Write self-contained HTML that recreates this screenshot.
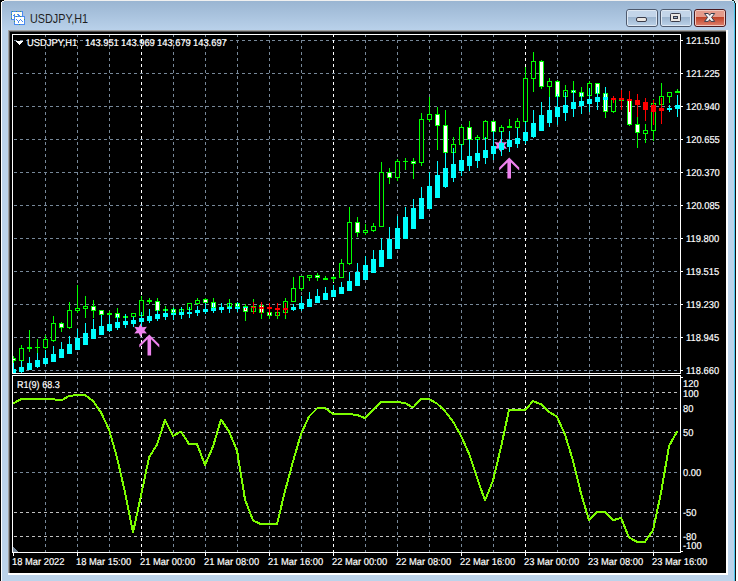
<!DOCTYPE html>
<html><head><meta charset="utf-8"><style>
html,body{margin:0;padding:0;width:738px;height:581px;overflow:hidden;background:#000;font-family:"Liberation Sans", sans-serif;}
div{font-family:"Liberation Sans", sans-serif;}
</style></head><body>
<div style="position:absolute;left:0;top:0;width:738px;height:581px;background:#bcd3ea"></div>
<div style="position:absolute;left:0;top:0;width:738px;height:30px;background:linear-gradient(#99b4d1,#b9d1ea)"></div>
<div style="position:absolute;left:0;top:0;width:738px;height:1px;background:#f0f0f0"></div>
<div style="position:absolute;left:0;top:0;width:1px;height:581px;background:#000"></div>
<div style="position:absolute;left:1px;top:1px;width:1px;height:580px;background:#fff"></div>
<div style="position:absolute;left:0;top:0;width:4px;height:1px;background:#000"></div>
<div style="position:absolute;left:1px;top:1px;width:1px;height:1px;background:#000"></div>
<div style="position:absolute;left:2px;top:1px;width:2px;height:1px;background:#fff"></div>
<div style="position:absolute;left:734px;top:0;width:1px;height:581px;background:#4cc8f0"></div>
<div style="position:absolute;left:735px;top:0;width:1px;height:581px;background:#1a1010"></div>
<div style="position:absolute;left:736px;top:0;width:2px;height:581px;background:#fff"></div>
<div style="position:absolute;left:8px;top:30px;width:720px;height:545px;background:#fff"></div>
<div style="position:absolute;left:8px;top:30px;width:718px;height:543px;background:#a0a0a0"></div>
<div style="position:absolute;left:9px;top:31px;width:717px;height:542px;background:#505050"></div>
<div style="position:absolute;left:10px;top:32px;width:716px;height:541px;background:#000"></div>
<svg width="738" height="581" style="position:absolute;left:0;top:0">
<defs>
<clipPath id="cm"><rect x="13" y="35" width="667" height="338"/></clipPath>
<clipPath id="ci"><rect x="13" y="376" width="667" height="176"/></clipPath>
</defs>
<g shape-rendering="crispEdges">
<rect x="12.5" y="34.5" width="668" height="339" fill="none" stroke="#fff"/>
<rect x="12.5" y="375.5" width="668" height="177" fill="none" stroke="#fff"/>
<g clip-path="url(#cm)"><line x1="13" y1="40.5" x2="680" y2="40.5" stroke="#778899" stroke-width="1" stroke-dasharray="3 3" stroke-dashoffset="5"/><line x1="13" y1="73.5" x2="680" y2="73.5" stroke="#778899" stroke-width="1" stroke-dasharray="3 3" stroke-dashoffset="5"/><line x1="13" y1="106.5" x2="680" y2="106.5" stroke="#778899" stroke-width="1" stroke-dasharray="3 3" stroke-dashoffset="5"/><line x1="13" y1="139.5" x2="680" y2="139.5" stroke="#778899" stroke-width="1" stroke-dasharray="3 3" stroke-dashoffset="5"/><line x1="13" y1="172.5" x2="680" y2="172.5" stroke="#778899" stroke-width="1" stroke-dasharray="3 3" stroke-dashoffset="5"/><line x1="13" y1="205.5" x2="680" y2="205.5" stroke="#778899" stroke-width="1" stroke-dasharray="3 3" stroke-dashoffset="5"/><line x1="13" y1="238.5" x2="680" y2="238.5" stroke="#778899" stroke-width="1" stroke-dasharray="3 3" stroke-dashoffset="5"/><line x1="13" y1="271.5" x2="680" y2="271.5" stroke="#778899" stroke-width="1" stroke-dasharray="3 3" stroke-dashoffset="5"/><line x1="13" y1="304.5" x2="680" y2="304.5" stroke="#778899" stroke-width="1" stroke-dasharray="3 3" stroke-dashoffset="5"/><line x1="13" y1="337.5" x2="680" y2="337.5" stroke="#778899" stroke-width="1" stroke-dasharray="3 3" stroke-dashoffset="5"/><line x1="13" y1="370.5" x2="680" y2="370.5" stroke="#778899" stroke-width="1" stroke-dasharray="3 3" stroke-dashoffset="5"/><line x1="45.5" y1="35" x2="45.5" y2="373" stroke="#778899" stroke-width="1" stroke-dasharray="3 3" stroke-dashoffset="1"/><line x1="77.5" y1="35" x2="77.5" y2="373" stroke="#778899" stroke-width="1" stroke-dasharray="3 3" stroke-dashoffset="1"/><line x1="109.5" y1="35" x2="109.5" y2="373" stroke="#778899" stroke-width="1" stroke-dasharray="3 3" stroke-dashoffset="1"/><line x1="141.5" y1="35" x2="141.5" y2="373" stroke="#ffffff" stroke-width="1" stroke-dasharray="3 3" stroke-dashoffset="1"/><line x1="173.5" y1="35" x2="173.5" y2="373" stroke="#778899" stroke-width="1" stroke-dasharray="3 3" stroke-dashoffset="1"/><line x1="205.5" y1="35" x2="205.5" y2="373" stroke="#778899" stroke-width="1" stroke-dasharray="3 3" stroke-dashoffset="1"/><line x1="237.5" y1="35" x2="237.5" y2="373" stroke="#778899" stroke-width="1" stroke-dasharray="3 3" stroke-dashoffset="1"/><line x1="269.5" y1="35" x2="269.5" y2="373" stroke="#778899" stroke-width="1" stroke-dasharray="3 3" stroke-dashoffset="1"/><line x1="301.5" y1="35" x2="301.5" y2="373" stroke="#778899" stroke-width="1" stroke-dasharray="3 3" stroke-dashoffset="1"/><line x1="333.5" y1="35" x2="333.5" y2="373" stroke="#ffffff" stroke-width="1" stroke-dasharray="3 3" stroke-dashoffset="1"/><line x1="365.5" y1="35" x2="365.5" y2="373" stroke="#778899" stroke-width="1" stroke-dasharray="3 3" stroke-dashoffset="1"/><line x1="397.5" y1="35" x2="397.5" y2="373" stroke="#778899" stroke-width="1" stroke-dasharray="3 3" stroke-dashoffset="1"/><line x1="429.5" y1="35" x2="429.5" y2="373" stroke="#778899" stroke-width="1" stroke-dasharray="3 3" stroke-dashoffset="1"/><line x1="461.5" y1="35" x2="461.5" y2="373" stroke="#778899" stroke-width="1" stroke-dasharray="3 3" stroke-dashoffset="1"/><line x1="493.5" y1="35" x2="493.5" y2="373" stroke="#778899" stroke-width="1" stroke-dasharray="3 3" stroke-dashoffset="1"/><line x1="525.5" y1="35" x2="525.5" y2="373" stroke="#ffffff" stroke-width="1" stroke-dasharray="3 3" stroke-dashoffset="1"/><line x1="557.5" y1="35" x2="557.5" y2="373" stroke="#778899" stroke-width="1" stroke-dasharray="3 3" stroke-dashoffset="1"/><line x1="589.5" y1="35" x2="589.5" y2="373" stroke="#778899" stroke-width="1" stroke-dasharray="3 3" stroke-dashoffset="1"/><line x1="621.5" y1="35" x2="621.5" y2="373" stroke="#778899" stroke-width="1" stroke-dasharray="3 3" stroke-dashoffset="1"/><line x1="653.5" y1="35" x2="653.5" y2="373" stroke="#778899" stroke-width="1" stroke-dasharray="3 3" stroke-dashoffset="1"/><rect x="13" y="356" width="1" height="7" fill="#00ff00"/><rect x="11" y="358" width="5" height="3" fill="#00ff00"/><rect x="12" y="359" width="3" height="1" fill="#ffffff"/><rect x="21" y="345" width="1" height="16" fill="#00ff00"/><rect x="19" y="348" width="5" height="13" fill="#00ff00"/><rect x="20" y="349" width="3" height="11" fill="#000000"/><rect x="29" y="330" width="1" height="22" fill="#00ff00"/><rect x="27" y="347" width="5" height="2" fill="#00ff00"/><rect x="37" y="339" width="1" height="14" fill="#00ff00"/><rect x="35" y="347" width="5" height="1" fill="#00ff00"/><rect x="45" y="335" width="1" height="14" fill="#00ff00"/><rect x="43" y="339" width="5" height="9" fill="#00ff00"/><rect x="44" y="340" width="3" height="7" fill="#000000"/><rect x="53" y="316" width="1" height="26" fill="#00ff00"/><rect x="51" y="323" width="5" height="18" fill="#00ff00"/><rect x="52" y="324" width="3" height="16" fill="#000000"/><rect x="61" y="322" width="1" height="10" fill="#00ff00"/><rect x="59" y="323" width="5" height="5" fill="#00ff00"/><rect x="60" y="324" width="3" height="3" fill="#ffffff"/><rect x="69" y="302" width="1" height="27" fill="#00ff00"/><rect x="67" y="310" width="5" height="18" fill="#00ff00"/><rect x="68" y="311" width="3" height="16" fill="#000000"/><rect x="77" y="285" width="1" height="28" fill="#00ff00"/><rect x="75" y="308" width="5" height="3" fill="#00ff00"/><rect x="76" y="309" width="3" height="1" fill="#000000"/><rect x="85" y="296" width="1" height="22" fill="#00ff00"/><rect x="83" y="306" width="5" height="3" fill="#00ff00"/><rect x="84" y="307" width="3" height="1" fill="#000000"/><rect x="93" y="300" width="1" height="18" fill="#00ff00"/><rect x="91" y="306" width="5" height="5" fill="#00ff00"/><rect x="92" y="307" width="3" height="3" fill="#ffffff"/><rect x="101" y="310" width="1" height="5" fill="#00ff00"/><rect x="99" y="310" width="5" height="5" fill="#00ff00"/><rect x="100" y="311" width="3" height="3" fill="#ffffff"/><rect x="109" y="311" width="1" height="4" fill="#00ff00"/><rect x="107" y="313" width="5" height="2" fill="#00ff00"/><rect x="117" y="308" width="1" height="10" fill="#00ff00"/><rect x="115" y="313" width="5" height="5" fill="#00ff00"/><rect x="116" y="314" width="3" height="3" fill="#ffffff"/><rect x="125" y="316" width="1" height="2" fill="#00ff00"/><rect x="123" y="316" width="5" height="2" fill="#00ff00"/><rect x="133" y="313" width="1" height="4" fill="#00ff00"/><rect x="131" y="313" width="5" height="4" fill="#00ff00"/><rect x="132" y="314" width="3" height="2" fill="#000000"/><rect x="141" y="296" width="1" height="20" fill="#00ff00"/><rect x="139" y="300" width="5" height="16" fill="#00ff00"/><rect x="140" y="301" width="3" height="14" fill="#000000"/><rect x="149" y="298" width="1" height="6" fill="#00ff00"/><rect x="147" y="300" width="5" height="2" fill="#00ff00"/><rect x="157" y="298" width="1" height="13" fill="#00ff00"/><rect x="155" y="301" width="5" height="10" fill="#00ff00"/><rect x="156" y="302" width="3" height="8" fill="#ffffff"/><rect x="165" y="306" width="1" height="6" fill="#00ff00"/><rect x="163" y="309" width="5" height="2" fill="#00ff00"/><rect x="173" y="307" width="1" height="6" fill="#00ff00"/><rect x="171" y="309" width="5" height="4" fill="#00ff00"/><rect x="172" y="310" width="3" height="2" fill="#ffffff"/><rect x="181" y="309" width="1" height="5" fill="#00ff00"/><rect x="179" y="309" width="5" height="5" fill="#00ff00"/><rect x="180" y="310" width="3" height="3" fill="#000000"/><rect x="189" y="303" width="1" height="7" fill="#00ff00"/><rect x="187" y="303" width="5" height="7" fill="#00ff00"/><rect x="188" y="304" width="3" height="5" fill="#000000"/><rect x="197" y="298" width="1" height="7" fill="#00ff00"/><rect x="195" y="300" width="5" height="4" fill="#00ff00"/><rect x="196" y="301" width="3" height="2" fill="#000000"/><rect x="205" y="298" width="1" height="5" fill="#00ff00"/><rect x="203" y="299" width="5" height="4" fill="#00ff00"/><rect x="204" y="300" width="3" height="2" fill="#ffffff"/><rect x="213" y="298" width="1" height="10" fill="#00ff00"/><rect x="211" y="302" width="5" height="6" fill="#00ff00"/><rect x="212" y="303" width="3" height="4" fill="#ffffff"/><rect x="221" y="307" width="1" height="3" fill="#00ff00"/><rect x="219" y="307" width="5" height="3" fill="#00ff00"/><rect x="220" y="308" width="3" height="1" fill="#000000"/><rect x="229" y="299" width="1" height="8" fill="#00ff00"/><rect x="227" y="303" width="5" height="4" fill="#00ff00"/><rect x="228" y="304" width="3" height="2" fill="#000000"/><rect x="237" y="302" width="1" height="5" fill="#00ff00"/><rect x="235" y="303" width="5" height="4" fill="#00ff00"/><rect x="236" y="304" width="3" height="2" fill="#ffffff"/><rect x="245" y="304" width="1" height="17" fill="#00ff00"/><rect x="243" y="306" width="5" height="6" fill="#00ff00"/><rect x="244" y="307" width="3" height="4" fill="#ffffff"/><rect x="253" y="299" width="1" height="13" fill="#00ff00"/><rect x="251" y="306" width="5" height="6" fill="#00ff00"/><rect x="252" y="307" width="3" height="4" fill="#000000"/><rect x="261" y="305" width="1" height="14" fill="#00ff00"/><rect x="259" y="305" width="5" height="8" fill="#00ff00"/><rect x="260" y="306" width="3" height="6" fill="#ffffff"/><rect x="269" y="311" width="1" height="8" fill="#00ff00"/><rect x="267" y="312" width="5" height="4" fill="#00ff00"/><rect x="268" y="313" width="3" height="2" fill="#ffffff"/><rect x="277" y="311" width="1" height="8" fill="#00ff00"/><rect x="275" y="312" width="5" height="4" fill="#00ff00"/><rect x="276" y="313" width="3" height="2" fill="#000000"/><rect x="285" y="298" width="1" height="21" fill="#00ff00"/><rect x="283" y="301" width="5" height="12" fill="#00ff00"/><rect x="284" y="302" width="3" height="10" fill="#000000"/><rect x="293" y="277" width="1" height="25" fill="#00ff00"/><rect x="291" y="288" width="5" height="14" fill="#00ff00"/><rect x="292" y="289" width="3" height="12" fill="#000000"/><rect x="301" y="276" width="1" height="15" fill="#00ff00"/><rect x="299" y="276" width="5" height="13" fill="#00ff00"/><rect x="300" y="277" width="3" height="11" fill="#000000"/><rect x="309" y="275" width="1" height="6" fill="#00ff00"/><rect x="307" y="275" width="5" height="3" fill="#00ff00"/><rect x="308" y="276" width="3" height="1" fill="#000000"/><rect x="317" y="273" width="1" height="8" fill="#00ff00"/><rect x="315" y="275" width="5" height="3" fill="#00ff00"/><rect x="316" y="276" width="3" height="1" fill="#ffffff"/><rect x="325" y="276" width="1" height="4" fill="#00ff00"/><rect x="323" y="278" width="5" height="2" fill="#00ff00"/><rect x="333" y="276" width="1" height="6" fill="#00ff00"/><rect x="331" y="277" width="5" height="2" fill="#00ff00"/><rect x="341" y="259" width="1" height="19" fill="#00ff00"/><rect x="339" y="263" width="5" height="15" fill="#00ff00"/><rect x="340" y="264" width="3" height="13" fill="#000000"/><rect x="349" y="207" width="1" height="58" fill="#00ff00"/><rect x="347" y="222" width="5" height="42" fill="#00ff00"/><rect x="348" y="223" width="3" height="40" fill="#000000"/><rect x="357" y="217" width="1" height="20" fill="#00ff00"/><rect x="355" y="222" width="5" height="11" fill="#00ff00"/><rect x="356" y="223" width="3" height="9" fill="#ffffff"/><rect x="365" y="224" width="1" height="11" fill="#00ff00"/><rect x="363" y="230" width="5" height="3" fill="#00ff00"/><rect x="364" y="231" width="3" height="1" fill="#000000"/><rect x="373" y="223" width="1" height="9" fill="#00ff00"/><rect x="371" y="226" width="5" height="5" fill="#00ff00"/><rect x="372" y="227" width="3" height="3" fill="#000000"/><rect x="381" y="162" width="1" height="65" fill="#00ff00"/><rect x="379" y="172" width="5" height="55" fill="#00ff00"/><rect x="380" y="173" width="3" height="53" fill="#000000"/><rect x="389" y="168" width="1" height="16" fill="#00ff00"/><rect x="387" y="172" width="5" height="6" fill="#00ff00"/><rect x="388" y="173" width="3" height="4" fill="#ffffff"/><rect x="397" y="159" width="1" height="22" fill="#00ff00"/><rect x="395" y="161" width="5" height="17" fill="#00ff00"/><rect x="396" y="162" width="3" height="15" fill="#000000"/><rect x="405" y="158" width="1" height="12" fill="#00ff00"/><rect x="403" y="161" width="5" height="1" fill="#00ff00"/><rect x="413" y="158" width="1" height="21" fill="#00ff00"/><rect x="411" y="161" width="5" height="3" fill="#00ff00"/><rect x="412" y="162" width="3" height="1" fill="#ffffff"/><rect x="421" y="113" width="1" height="53" fill="#00ff00"/><rect x="419" y="119" width="5" height="44" fill="#00ff00"/><rect x="420" y="120" width="3" height="42" fill="#000000"/><rect x="429" y="97" width="1" height="25" fill="#00ff00"/><rect x="427" y="114" width="5" height="6" fill="#00ff00"/><rect x="428" y="115" width="3" height="4" fill="#000000"/><rect x="437" y="107" width="1" height="43" fill="#00ff00"/><rect x="435" y="114" width="5" height="12" fill="#00ff00"/><rect x="436" y="115" width="3" height="10" fill="#ffffff"/><rect x="445" y="110" width="1" height="43" fill="#00ff00"/><rect x="443" y="125" width="5" height="28" fill="#00ff00"/><rect x="444" y="126" width="3" height="26" fill="#ffffff"/><rect x="453" y="137" width="1" height="16" fill="#00ff00"/><rect x="451" y="144" width="5" height="9" fill="#00ff00"/><rect x="452" y="145" width="3" height="7" fill="#000000"/><rect x="461" y="125" width="1" height="20" fill="#00ff00"/><rect x="459" y="127" width="5" height="18" fill="#00ff00"/><rect x="460" y="128" width="3" height="16" fill="#000000"/><rect x="469" y="121" width="1" height="19" fill="#00ff00"/><rect x="467" y="127" width="5" height="13" fill="#00ff00"/><rect x="468" y="128" width="3" height="11" fill="#ffffff"/><rect x="477" y="135" width="1" height="5" fill="#00ff00"/><rect x="475" y="137" width="5" height="3" fill="#00ff00"/><rect x="476" y="138" width="3" height="1" fill="#000000"/><rect x="485" y="120" width="1" height="19" fill="#00ff00"/><rect x="483" y="121" width="5" height="18" fill="#00ff00"/><rect x="484" y="122" width="3" height="16" fill="#000000"/><rect x="493" y="120" width="1" height="12" fill="#00ff00"/><rect x="491" y="121" width="5" height="11" fill="#00ff00"/><rect x="492" y="122" width="3" height="9" fill="#ffffff"/><rect x="501" y="125" width="1" height="7" fill="#00ff00"/><rect x="499" y="127" width="5" height="5" fill="#00ff00"/><rect x="500" y="128" width="3" height="3" fill="#000000"/><rect x="509" y="119" width="1" height="9" fill="#00ff00"/><rect x="507" y="126" width="5" height="2" fill="#00ff00"/><rect x="517" y="118" width="1" height="10" fill="#00ff00"/><rect x="515" y="121" width="5" height="7" fill="#00ff00"/><rect x="516" y="122" width="3" height="5" fill="#000000"/><rect x="525" y="67" width="1" height="55" fill="#00ff00"/><rect x="523" y="78" width="5" height="44" fill="#00ff00"/><rect x="524" y="79" width="3" height="42" fill="#000000"/><rect x="533" y="52" width="1" height="40" fill="#00ff00"/><rect x="531" y="61" width="5" height="18" fill="#00ff00"/><rect x="532" y="62" width="3" height="16" fill="#000000"/><rect x="541" y="60" width="1" height="29" fill="#00ff00"/><rect x="539" y="61" width="5" height="26" fill="#00ff00"/><rect x="540" y="62" width="3" height="24" fill="#ffffff"/><rect x="549" y="78" width="1" height="19" fill="#00ff00"/><rect x="547" y="81" width="5" height="6" fill="#00ff00"/><rect x="548" y="82" width="3" height="4" fill="#000000"/><rect x="557" y="80" width="1" height="17" fill="#00ff00"/><rect x="555" y="81" width="5" height="16" fill="#00ff00"/><rect x="556" y="82" width="3" height="14" fill="#ffffff"/><rect x="565" y="85" width="1" height="12" fill="#00ff00"/><rect x="563" y="90" width="5" height="7" fill="#00ff00"/><rect x="564" y="91" width="3" height="5" fill="#000000"/><rect x="573" y="81" width="1" height="12" fill="#00ff00"/><rect x="571" y="90" width="5" height="3" fill="#00ff00"/><rect x="572" y="91" width="3" height="1" fill="#ffffff"/><rect x="581" y="87" width="1" height="10" fill="#00ff00"/><rect x="579" y="92" width="5" height="5" fill="#00ff00"/><rect x="580" y="93" width="3" height="3" fill="#ffffff"/><rect x="589" y="81" width="1" height="15" fill="#00ff00"/><rect x="587" y="83" width="5" height="13" fill="#00ff00"/><rect x="588" y="84" width="3" height="11" fill="#000000"/><rect x="597" y="83" width="1" height="11" fill="#00ff00"/><rect x="595" y="83" width="5" height="11" fill="#00ff00"/><rect x="596" y="84" width="3" height="9" fill="#ffffff"/><rect x="605" y="87" width="1" height="31" fill="#00ff00"/><rect x="603" y="93" width="5" height="19" fill="#00ff00"/><rect x="604" y="94" width="3" height="17" fill="#ffffff"/><rect x="613" y="96" width="1" height="17" fill="#00ff00"/><rect x="611" y="99" width="5" height="13" fill="#00ff00"/><rect x="612" y="100" width="3" height="11" fill="#000000"/><rect x="621" y="100" width="1" height="1" fill="#00ff00"/><rect x="619" y="100" width="5" height="1" fill="#00ff00"/><rect x="629" y="99" width="1" height="27" fill="#00ff00"/><rect x="627" y="99" width="5" height="26" fill="#00ff00"/><rect x="628" y="100" width="3" height="24" fill="#ffffff"/><rect x="637" y="117" width="1" height="31" fill="#00ff00"/><rect x="635" y="124" width="5" height="9" fill="#00ff00"/><rect x="636" y="125" width="3" height="7" fill="#ffffff"/><rect x="645" y="124" width="1" height="19" fill="#00ff00"/><rect x="643" y="130" width="5" height="4" fill="#00ff00"/><rect x="644" y="131" width="3" height="2" fill="#000000"/><rect x="653" y="99" width="1" height="42" fill="#00ff00"/><rect x="651" y="103" width="5" height="28" fill="#00ff00"/><rect x="652" y="104" width="3" height="26" fill="#000000"/><rect x="661" y="83" width="1" height="22" fill="#00ff00"/><rect x="659" y="96" width="5" height="9" fill="#00ff00"/><rect x="660" y="97" width="3" height="7" fill="#000000"/><rect x="669" y="92" width="1" height="11" fill="#00ff00"/><rect x="667" y="92" width="5" height="5" fill="#00ff00"/><rect x="668" y="93" width="3" height="3" fill="#000000"/><rect x="677" y="89" width="1" height="4" fill="#00ff00"/><rect x="675" y="91" width="5" height="2" fill="#00ff00"/></g>
</g>
<g clip-path="url(#cm)"><polygon points="140.60,323.50 138.70,327.18 134.28,326.85 136.80,330.20 134.28,333.55 138.70,333.22 140.60,336.90 142.50,333.22 146.92,333.55 144.40,330.20 146.92,326.85 142.50,327.18" fill="#ee82ee"/><polygon points="500.70,138.70 498.80,142.38 494.38,142.05 496.90,145.40 494.38,148.75 498.80,148.42 500.70,152.10 502.60,148.42 507.02,148.75 504.50,145.40 507.02,142.05 502.60,142.38" fill="#ee82ee"/></g>
<g clip-path="url(#cm)" shape-rendering="crispEdges"><rect x="13" y="363" width="1" height="10" fill="#00ffff"/><rect x="11" y="369" width="5" height="4" fill="#00ffff"/><rect x="21" y="361" width="1" height="12" fill="#00ffff"/><rect x="19" y="367" width="5" height="5" fill="#00ffff"/><rect x="29" y="357" width="1" height="13" fill="#00ffff"/><rect x="27" y="363" width="5" height="7" fill="#00ffff"/><rect x="37" y="353" width="1" height="15" fill="#00ffff"/><rect x="35" y="360" width="5" height="7" fill="#00ffff"/><rect x="45" y="350" width="1" height="15" fill="#00ffff"/><rect x="43" y="358" width="5" height="6" fill="#00ffff"/><rect x="53" y="346" width="1" height="16" fill="#00ffff"/><rect x="51" y="354" width="5" height="8" fill="#00ffff"/><rect x="61" y="342" width="1" height="16" fill="#00ffff"/><rect x="59" y="349" width="5" height="9" fill="#00ffff"/><rect x="69" y="336" width="1" height="18" fill="#00ffff"/><rect x="67" y="344" width="5" height="10" fill="#00ffff"/><rect x="77" y="329" width="1" height="21" fill="#00ffff"/><rect x="75" y="338" width="5" height="12" fill="#00ffff"/><rect x="85" y="323" width="1" height="22" fill="#00ffff"/><rect x="83" y="333" width="5" height="12" fill="#00ffff"/><rect x="93" y="319" width="1" height="20" fill="#00ffff"/><rect x="91" y="329" width="5" height="10" fill="#00ffff"/><rect x="101" y="315" width="1" height="20" fill="#00ffff"/><rect x="99" y="326" width="5" height="9" fill="#00ffff"/><rect x="109" y="315" width="1" height="17" fill="#00ffff"/><rect x="107" y="324" width="5" height="7" fill="#00ffff"/><rect x="117" y="315" width="1" height="15" fill="#00ffff"/><rect x="115" y="322" width="5" height="6" fill="#00ffff"/><rect x="125" y="314" width="1" height="14" fill="#00ffff"/><rect x="123" y="321" width="5" height="4" fill="#00ffff"/><rect x="133" y="317" width="1" height="10" fill="#00ffff"/><rect x="131" y="320" width="5" height="4" fill="#00ffff"/><rect x="141" y="312" width="1" height="14" fill="#00ffff"/><rect x="139" y="318" width="5" height="4" fill="#00ffff"/><rect x="149" y="309" width="1" height="14" fill="#00ffff"/><rect x="147" y="316" width="5" height="5" fill="#00ffff"/><rect x="157" y="310" width="1" height="11" fill="#00ffff"/><rect x="155" y="314" width="5" height="5" fill="#00ffff"/><rect x="165" y="309" width="1" height="11" fill="#00ffff"/><rect x="163" y="313" width="5" height="4" fill="#00ffff"/><rect x="173" y="308" width="1" height="12" fill="#00ffff"/><rect x="171" y="313" width="5" height="2" fill="#00ffff"/><rect x="181" y="307" width="1" height="12" fill="#00ffff"/><rect x="179" y="312" width="5" height="3" fill="#00ffff"/><rect x="189" y="307" width="1" height="11" fill="#00ffff"/><rect x="187" y="312" width="5" height="2" fill="#00ffff"/><rect x="197" y="306" width="1" height="10" fill="#00ffff"/><rect x="195" y="310" width="5" height="3" fill="#00ffff"/><rect x="205" y="303" width="1" height="11" fill="#00ffff"/><rect x="203" y="309" width="5" height="3" fill="#00ffff"/><rect x="213" y="303" width="1" height="10" fill="#00ffff"/><rect x="211" y="308" width="5" height="3" fill="#00ffff"/><rect x="221" y="303" width="1" height="10" fill="#00ffff"/><rect x="219" y="307" width="5" height="3" fill="#00ffff"/><rect x="229" y="303" width="1" height="10" fill="#00ffff"/><rect x="227" y="307" width="5" height="2" fill="#00ffff"/><rect x="237" y="302" width="1" height="10" fill="#00ffff"/><rect x="235" y="307" width="5" height="2" fill="#00ffff"/><rect x="245" y="307" width="1" height="1" fill="#00ffff"/><rect x="243" y="307" width="5" height="1" fill="#00ffff"/><rect x="253" y="302" width="1" height="12" fill="#ff0000"/><rect x="251" y="307" width="5" height="1" fill="#ff0000"/><rect x="261" y="302" width="1" height="12" fill="#ff0000"/><rect x="259" y="307" width="5" height="2" fill="#ff0000"/><rect x="269" y="303" width="1" height="12" fill="#ff0000"/><rect x="267" y="307" width="5" height="2" fill="#ff0000"/><rect x="277" y="303" width="1" height="13" fill="#ff0000"/><rect x="275" y="308" width="5" height="2" fill="#ff0000"/><rect x="285" y="303" width="1" height="12" fill="#ff0000"/><rect x="283" y="308" width="5" height="2" fill="#ff0000"/><rect x="293" y="304" width="1" height="7" fill="#00ffff"/><rect x="291" y="307" width="5" height="3" fill="#00ffff"/><rect x="301" y="296" width="1" height="15" fill="#00ffff"/><rect x="299" y="303" width="5" height="6" fill="#00ffff"/><rect x="309" y="292" width="1" height="15" fill="#00ffff"/><rect x="307" y="299" width="5" height="8" fill="#00ffff"/><rect x="317" y="289" width="1" height="14" fill="#00ffff"/><rect x="315" y="296" width="5" height="7" fill="#00ffff"/><rect x="325" y="287" width="1" height="13" fill="#00ffff"/><rect x="323" y="293" width="5" height="7" fill="#00ffff"/><rect x="333" y="285" width="1" height="12" fill="#00ffff"/><rect x="331" y="290" width="5" height="7" fill="#00ffff"/><rect x="341" y="282" width="1" height="12" fill="#00ffff"/><rect x="339" y="287" width="5" height="7" fill="#00ffff"/><rect x="349" y="272" width="1" height="19" fill="#00ffff"/><rect x="347" y="281" width="5" height="10" fill="#00ffff"/><rect x="357" y="263" width="1" height="23" fill="#00ffff"/><rect x="355" y="272" width="5" height="14" fill="#00ffff"/><rect x="365" y="256" width="1" height="24" fill="#00ffff"/><rect x="363" y="265" width="5" height="15" fill="#00ffff"/><rect x="373" y="250" width="1" height="23" fill="#00ffff"/><rect x="371" y="259" width="5" height="14" fill="#00ffff"/><rect x="381" y="238" width="1" height="29" fill="#00ffff"/><rect x="379" y="250" width="5" height="17" fill="#00ffff"/><rect x="389" y="227" width="1" height="32" fill="#00ffff"/><rect x="387" y="239" width="5" height="20" fill="#00ffff"/><rect x="397" y="216" width="1" height="33" fill="#00ffff"/><rect x="395" y="228" width="5" height="21" fill="#00ffff"/><rect x="405" y="207" width="1" height="32" fill="#00ffff"/><rect x="403" y="217" width="5" height="22" fill="#00ffff"/><rect x="413" y="199" width="1" height="30" fill="#00ffff"/><rect x="411" y="208" width="5" height="21" fill="#00ffff"/><rect x="421" y="187" width="1" height="32" fill="#00ffff"/><rect x="419" y="198" width="5" height="21" fill="#00ffff"/><rect x="429" y="172" width="1" height="37" fill="#00ffff"/><rect x="427" y="186" width="5" height="23" fill="#00ffff"/><rect x="437" y="161" width="1" height="37" fill="#00ffff"/><rect x="435" y="175" width="5" height="23" fill="#00ffff"/><rect x="445" y="153" width="1" height="35" fill="#00ffff"/><rect x="443" y="168" width="5" height="19" fill="#00ffff"/><rect x="453" y="148" width="1" height="34" fill="#00ffff"/><rect x="451" y="164" width="5" height="14" fill="#00ffff"/><rect x="461" y="144" width="1" height="32" fill="#00ffff"/><rect x="459" y="160" width="5" height="11" fill="#00ffff"/><rect x="469" y="139" width="1" height="32" fill="#00ffff"/><rect x="467" y="156" width="5" height="10" fill="#00ffff"/><rect x="477" y="139" width="1" height="29" fill="#00ffff"/><rect x="475" y="153" width="5" height="8" fill="#00ffff"/><rect x="485" y="137" width="1" height="27" fill="#00ffff"/><rect x="483" y="150" width="5" height="8" fill="#00ffff"/><rect x="493" y="131" width="1" height="29" fill="#00ffff"/><rect x="491" y="146" width="5" height="8" fill="#00ffff"/><rect x="501" y="131" width="1" height="25" fill="#00ffff"/><rect x="499" y="143" width="5" height="7" fill="#00ffff"/><rect x="509" y="131" width="1" height="21" fill="#00ffff"/><rect x="507" y="140" width="5" height="7" fill="#00ffff"/><rect x="517" y="128" width="1" height="20" fill="#00ffff"/><rect x="515" y="138" width="5" height="6" fill="#00ffff"/><rect x="525" y="121" width="1" height="23" fill="#00ffff"/><rect x="523" y="132" width="5" height="9" fill="#00ffff"/><rect x="533" y="110" width="1" height="28" fill="#00ffff"/><rect x="531" y="123" width="5" height="14" fill="#00ffff"/><rect x="541" y="102" width="1" height="29" fill="#00ffff"/><rect x="539" y="115" width="5" height="16" fill="#00ffff"/><rect x="549" y="97" width="1" height="30" fill="#00ffff"/><rect x="547" y="110" width="5" height="13" fill="#00ffff"/><rect x="557" y="94" width="1" height="31" fill="#00ffff"/><rect x="555" y="107" width="5" height="10" fill="#00ffff"/><rect x="565" y="92" width="1" height="29" fill="#00ffff"/><rect x="563" y="105" width="5" height="8" fill="#00ffff"/><rect x="573" y="90" width="1" height="27" fill="#00ffff"/><rect x="571" y="102" width="5" height="7" fill="#00ffff"/><rect x="581" y="93" width="1" height="21" fill="#00ffff"/><rect x="579" y="101" width="5" height="5" fill="#00ffff"/><rect x="589" y="88" width="1" height="24" fill="#00ffff"/><rect x="587" y="99" width="5" height="5" fill="#00ffff"/><rect x="597" y="87" width="1" height="23" fill="#00ffff"/><rect x="595" y="97" width="5" height="5" fill="#00ffff"/><rect x="605" y="87" width="1" height="23" fill="#00ffff"/><rect x="603" y="97" width="5" height="3" fill="#00ffff"/><rect x="613" y="96" width="1" height="7" fill="#ff0000"/><rect x="611" y="98" width="5" height="2" fill="#ff0000"/><rect x="621" y="90" width="1" height="20" fill="#ff0000"/><rect x="619" y="98" width="5" height="2" fill="#ff0000"/><rect x="629" y="91" width="1" height="21" fill="#ff0000"/><rect x="627" y="99" width="5" height="2" fill="#ff0000"/><rect x="637" y="94" width="1" height="23" fill="#ff0000"/><rect x="635" y="100" width="5" height="5" fill="#ff0000"/><rect x="645" y="98" width="1" height="23" fill="#ff0000"/><rect x="643" y="102" width="5" height="8" fill="#ff0000"/><rect x="653" y="100" width="1" height="25" fill="#ff0000"/><rect x="651" y="105" width="5" height="7" fill="#ff0000"/><rect x="661" y="98" width="1" height="26" fill="#ff0000"/><rect x="659" y="108" width="5" height="3" fill="#ff0000"/><rect x="669" y="105" width="1" height="7" fill="#00ffff"/><rect x="667" y="108" width="5" height="2" fill="#00ffff"/><rect x="677" y="95" width="1" height="22" fill="#00ffff"/><rect x="675" y="105" width="5" height="4" fill="#00ffff"/><rect x="245" y="308" width="1" height="2" fill="#ff0000"/></g>
<g clip-path="url(#cm)"><path d="M149.3,334.5 L159.3,344.5 L159.3,347.5 L151.10000000000002,339.3 L151.10000000000002,355.5 L147.5,355.5 L147.5,339.3 L139.3,347.5 L139.3,344.5 Z" fill="#ee82ee"/><path d="M509.2,157.6 L519.2,167.6 L519.2,170.6 L511.0,162.4 L511.0,178.6 L507.4,178.6 L507.4,162.4 L499.2,170.6 L499.2,167.6 Z" fill="#ee82ee"/></g>
<g clip-path="url(#ci)" shape-rendering="crispEdges"><line x1="45.5" y1="376" x2="45.5" y2="552" stroke="#778899" stroke-width="1" stroke-dasharray="3 3" stroke-dashoffset="0"/><line x1="77.5" y1="376" x2="77.5" y2="552" stroke="#778899" stroke-width="1" stroke-dasharray="3 3" stroke-dashoffset="0"/><line x1="109.5" y1="376" x2="109.5" y2="552" stroke="#778899" stroke-width="1" stroke-dasharray="3 3" stroke-dashoffset="0"/><line x1="141.5" y1="376" x2="141.5" y2="552" stroke="#ffffff" stroke-width="1" stroke-dasharray="3 3" stroke-dashoffset="0"/><line x1="173.5" y1="376" x2="173.5" y2="552" stroke="#778899" stroke-width="1" stroke-dasharray="3 3" stroke-dashoffset="0"/><line x1="205.5" y1="376" x2="205.5" y2="552" stroke="#778899" stroke-width="1" stroke-dasharray="3 3" stroke-dashoffset="0"/><line x1="237.5" y1="376" x2="237.5" y2="552" stroke="#778899" stroke-width="1" stroke-dasharray="3 3" stroke-dashoffset="0"/><line x1="269.5" y1="376" x2="269.5" y2="552" stroke="#778899" stroke-width="1" stroke-dasharray="3 3" stroke-dashoffset="0"/><line x1="301.5" y1="376" x2="301.5" y2="552" stroke="#778899" stroke-width="1" stroke-dasharray="3 3" stroke-dashoffset="0"/><line x1="333.5" y1="376" x2="333.5" y2="552" stroke="#ffffff" stroke-width="1" stroke-dasharray="3 3" stroke-dashoffset="0"/><line x1="365.5" y1="376" x2="365.5" y2="552" stroke="#778899" stroke-width="1" stroke-dasharray="3 3" stroke-dashoffset="0"/><line x1="397.5" y1="376" x2="397.5" y2="552" stroke="#778899" stroke-width="1" stroke-dasharray="3 3" stroke-dashoffset="0"/><line x1="429.5" y1="376" x2="429.5" y2="552" stroke="#778899" stroke-width="1" stroke-dasharray="3 3" stroke-dashoffset="0"/><line x1="461.5" y1="376" x2="461.5" y2="552" stroke="#778899" stroke-width="1" stroke-dasharray="3 3" stroke-dashoffset="0"/><line x1="493.5" y1="376" x2="493.5" y2="552" stroke="#778899" stroke-width="1" stroke-dasharray="3 3" stroke-dashoffset="0"/><line x1="525.5" y1="376" x2="525.5" y2="552" stroke="#ffffff" stroke-width="1" stroke-dasharray="3 3" stroke-dashoffset="0"/><line x1="557.5" y1="376" x2="557.5" y2="552" stroke="#778899" stroke-width="1" stroke-dasharray="3 3" stroke-dashoffset="0"/><line x1="589.5" y1="376" x2="589.5" y2="552" stroke="#778899" stroke-width="1" stroke-dasharray="3 3" stroke-dashoffset="0"/><line x1="621.5" y1="376" x2="621.5" y2="552" stroke="#778899" stroke-width="1" stroke-dasharray="3 3" stroke-dashoffset="0"/><line x1="653.5" y1="376" x2="653.5" y2="552" stroke="#778899" stroke-width="1" stroke-dasharray="3 3" stroke-dashoffset="0"/><line x1="13" y1="392.5" x2="680" y2="392.5" stroke="#c0c0c0" stroke-width="1" stroke-dasharray="3 3" stroke-dashoffset="5"/><line x1="13" y1="408.5" x2="680" y2="408.5" stroke="#c0c0c0" stroke-width="1" stroke-dasharray="3 3" stroke-dashoffset="5"/><line x1="13" y1="432.5" x2="680" y2="432.5" stroke="#c0c0c0" stroke-width="1" stroke-dasharray="3 3" stroke-dashoffset="5"/><line x1="13" y1="472.5" x2="680" y2="472.5" stroke="#778899" stroke-width="1" stroke-dasharray="3 3" stroke-dashoffset="5"/><line x1="13" y1="512.5" x2="680" y2="512.5" stroke="#c0c0c0" stroke-width="1" stroke-dasharray="3 3" stroke-dashoffset="5"/><line x1="13" y1="536.5" x2="680" y2="536.5" stroke="#c0c0c0" stroke-width="1" stroke-dasharray="3 3" stroke-dashoffset="5"/></g>
<g clip-path="url(#ci)"><g shape-rendering="crispEdges"><g fill="#7cfc00"><rect x="12" y="403" width="1" height="1"/><rect x="13" y="402" width="1" height="2"/><rect x="14" y="402" width="1" height="2"/><rect x="15" y="401" width="1" height="2"/><rect x="16" y="400" width="1" height="3"/><rect x="17" y="400" width="1" height="2"/><rect x="18" y="399" width="1" height="3"/><rect x="19" y="399" width="1" height="2"/><rect x="20" y="398" width="1" height="3"/><rect x="21" y="398" width="1" height="2"/><rect x="22" y="398" width="1" height="2"/><rect x="23" y="398" width="1" height="2"/><rect x="24" y="398" width="1" height="2"/><rect x="25" y="398" width="1" height="2"/><rect x="26" y="398" width="1" height="2"/><rect x="27" y="398" width="1" height="2"/><rect x="28" y="398" width="1" height="2"/><rect x="29" y="398" width="1" height="2"/><rect x="30" y="398" width="1" height="2"/><rect x="31" y="398" width="1" height="2"/><rect x="32" y="398" width="1" height="2"/><rect x="33" y="398" width="1" height="2"/><rect x="34" y="398" width="1" height="2"/><rect x="35" y="398" width="1" height="2"/><rect x="36" y="398" width="1" height="2"/><rect x="37" y="398" width="1" height="2"/><rect x="38" y="398" width="1" height="2"/><rect x="39" y="398" width="1" height="2"/><rect x="40" y="398" width="1" height="2"/><rect x="41" y="398" width="1" height="2"/><rect x="42" y="398" width="1" height="2"/><rect x="43" y="398" width="1" height="2"/><rect x="44" y="398" width="1" height="2"/><rect x="45" y="398" width="1" height="2"/><rect x="46" y="398" width="1" height="2"/><rect x="47" y="398" width="1" height="2"/><rect x="48" y="398" width="1" height="2"/><rect x="49" y="398" width="1" height="2"/><rect x="50" y="398" width="1" height="2"/><rect x="51" y="398" width="1" height="2"/><rect x="52" y="398" width="1" height="2"/><rect x="53" y="398" width="1" height="2"/><rect x="54" y="398" width="1" height="2"/><rect x="55" y="399" width="1" height="2"/><rect x="56" y="399" width="1" height="2"/><rect x="57" y="399" width="1" height="2"/><rect x="58" y="399" width="1" height="2"/><rect x="59" y="399" width="1" height="2"/><rect x="60" y="399" width="1" height="2"/><rect x="61" y="399" width="1" height="2"/><rect x="62" y="399" width="1" height="2"/><rect x="63" y="398" width="1" height="2"/><rect x="64" y="397" width="1" height="3"/><rect x="65" y="397" width="1" height="2"/><rect x="66" y="396" width="1" height="3"/><rect x="67" y="396" width="1" height="2"/><rect x="68" y="395" width="1" height="2"/><rect x="69" y="395" width="1" height="2"/><rect x="70" y="395" width="1" height="2"/><rect x="71" y="395" width="1" height="2"/><rect x="72" y="395" width="1" height="2"/><rect x="73" y="394" width="1" height="2"/><rect x="74" y="394" width="1" height="2"/><rect x="75" y="394" width="1" height="2"/><rect x="76" y="394" width="1" height="2"/><rect x="77" y="394" width="1" height="2"/><rect x="78" y="394" width="1" height="2"/><rect x="79" y="394" width="1" height="2"/><rect x="80" y="394" width="1" height="2"/><rect x="81" y="394" width="1" height="2"/><rect x="82" y="394" width="1" height="2"/><rect x="83" y="394" width="1" height="2"/><rect x="84" y="394" width="1" height="2"/><rect x="85" y="394" width="1" height="3"/><rect x="86" y="395" width="1" height="2"/><rect x="87" y="396" width="1" height="2"/><rect x="88" y="396" width="1" height="3"/><rect x="89" y="397" width="1" height="3"/><rect x="90" y="398" width="1" height="2"/><rect x="91" y="399" width="1" height="2"/><rect x="92" y="399" width="1" height="3"/><rect x="93" y="400" width="1" height="3"/><rect x="94" y="401" width="1" height="4"/><rect x="95" y="403" width="1" height="3"/><rect x="96" y="404" width="1" height="4"/><rect x="97" y="406" width="1" height="3"/><rect x="98" y="407" width="1" height="4"/><rect x="99" y="409" width="1" height="3"/><rect x="100" y="410" width="1" height="4"/><rect x="101" y="411" width="1" height="5"/><rect x="102" y="413" width="1" height="5"/><rect x="103" y="415" width="1" height="5"/><rect x="104" y="418" width="1" height="4"/><rect x="105" y="420" width="1" height="4"/><rect x="106" y="422" width="1" height="5"/><rect x="107" y="424" width="1" height="5"/><rect x="108" y="426" width="1" height="5"/><rect x="109" y="428" width="1" height="7"/><rect x="110" y="431" width="1" height="7"/><rect x="111" y="435" width="1" height="7"/><rect x="112" y="438" width="1" height="7"/><rect x="113" y="442" width="1" height="7"/><rect x="114" y="445" width="1" height="7"/><rect x="115" y="449" width="1" height="7"/><rect x="116" y="452" width="1" height="8"/><rect x="117" y="456" width="1" height="8"/><rect x="118" y="460" width="1" height="9"/><rect x="119" y="464" width="1" height="9"/><rect x="120" y="468" width="1" height="9"/><rect x="121" y="473" width="1" height="9"/><rect x="122" y="477" width="1" height="9"/><rect x="123" y="481" width="1" height="9"/><rect x="124" y="486" width="1" height="9"/><rect x="125" y="490" width="1" height="10"/><rect x="126" y="495" width="1" height="10"/><rect x="127" y="500" width="1" height="10"/><rect x="128" y="505" width="1" height="10"/><rect x="129" y="510" width="1" height="10"/><rect x="130" y="515" width="1" height="10"/><rect x="131" y="520" width="1" height="10"/><rect x="132" y="525" width="1" height="8"/><rect x="133" y="525" width="1" height="8"/><rect x="134" y="521" width="1" height="9"/><rect x="135" y="516" width="1" height="10"/><rect x="136" y="512" width="1" height="9"/><rect x="137" y="507" width="1" height="9"/><rect x="138" y="502" width="1" height="10"/><rect x="139" y="498" width="1" height="9"/><rect x="140" y="493" width="1" height="10"/><rect x="141" y="488" width="1" height="10"/><rect x="142" y="484" width="1" height="9"/><rect x="143" y="479" width="1" height="9"/><rect x="144" y="474" width="1" height="10"/><rect x="145" y="469" width="1" height="10"/><rect x="146" y="465" width="1" height="9"/><rect x="147" y="460" width="1" height="9"/><rect x="148" y="456" width="1" height="9"/><rect x="149" y="455" width="1" height="5"/><rect x="150" y="453" width="1" height="4"/><rect x="151" y="452" width="1" height="3"/><rect x="152" y="450" width="1" height="4"/><rect x="153" y="448" width="1" height="4"/><rect x="154" y="447" width="1" height="3"/><rect x="155" y="445" width="1" height="4"/><rect x="156" y="443" width="1" height="4"/><rect x="157" y="440" width="1" height="6"/><rect x="158" y="437" width="1" height="6"/><rect x="159" y="434" width="1" height="6"/><rect x="160" y="431" width="1" height="6"/><rect x="161" y="427" width="1" height="7"/><rect x="162" y="424" width="1" height="7"/><rect x="163" y="421" width="1" height="7"/><rect x="164" y="419" width="1" height="6"/><rect x="165" y="419" width="1" height="4"/><rect x="166" y="421" width="1" height="4"/><rect x="167" y="423" width="1" height="4"/><rect x="168" y="425" width="1" height="4"/><rect x="169" y="427" width="1" height="4"/><rect x="170" y="429" width="1" height="4"/><rect x="171" y="431" width="1" height="4"/><rect x="172" y="433" width="1" height="4"/><rect x="173" y="435" width="1" height="2"/><rect x="174" y="434" width="1" height="2"/><rect x="175" y="433" width="1" height="3"/><rect x="176" y="433" width="1" height="2"/><rect x="177" y="432" width="1" height="3"/><rect x="178" y="432" width="1" height="2"/><rect x="179" y="431" width="1" height="2"/><rect x="180" y="431" width="1" height="2"/><rect x="181" y="431" width="1" height="3"/><rect x="182" y="432" width="1" height="4"/><rect x="183" y="434" width="1" height="3"/><rect x="184" y="435" width="1" height="4"/><rect x="185" y="437" width="1" height="3"/><rect x="186" y="438" width="1" height="4"/><rect x="187" y="440" width="1" height="4"/><rect x="188" y="441" width="1" height="4"/><rect x="189" y="443" width="1" height="2"/><rect x="190" y="443" width="1" height="2"/><rect x="191" y="443" width="1" height="2"/><rect x="192" y="443" width="1" height="2"/><rect x="193" y="443" width="1" height="2"/><rect x="194" y="443" width="1" height="2"/><rect x="195" y="443" width="1" height="2"/><rect x="196" y="443" width="1" height="3"/><rect x="197" y="443" width="1" height="5"/><rect x="198" y="445" width="1" height="6"/><rect x="199" y="448" width="1" height="5"/><rect x="200" y="450" width="1" height="6"/><rect x="201" y="453" width="1" height="6"/><rect x="202" y="456" width="1" height="5"/><rect x="203" y="458" width="1" height="6"/><rect x="204" y="461" width="1" height="5"/><rect x="205" y="461" width="1" height="5"/><rect x="206" y="459" width="1" height="5"/><rect x="207" y="457" width="1" height="5"/><rect x="208" y="454" width="1" height="5"/><rect x="209" y="452" width="1" height="5"/><rect x="210" y="450" width="1" height="5"/><rect x="211" y="447" width="1" height="6"/><rect x="212" y="445" width="1" height="5"/><rect x="213" y="441" width="1" height="7"/><rect x="214" y="438" width="1" height="7"/><rect x="215" y="435" width="1" height="7"/><rect x="216" y="431" width="1" height="7"/><rect x="217" y="428" width="1" height="7"/><rect x="218" y="424" width="1" height="7"/><rect x="219" y="421" width="1" height="7"/><rect x="220" y="419" width="1" height="6"/><rect x="221" y="419" width="1" height="3"/><rect x="222" y="420" width="1" height="4"/><rect x="223" y="421" width="1" height="4"/><rect x="224" y="423" width="1" height="4"/><rect x="225" y="424" width="1" height="4"/><rect x="226" y="426" width="1" height="4"/><rect x="227" y="427" width="1" height="4"/><rect x="228" y="429" width="1" height="4"/><rect x="229" y="430" width="1" height="5"/><rect x="230" y="432" width="1" height="6"/><rect x="231" y="435" width="1" height="5"/><rect x="232" y="437" width="1" height="5"/><rect x="233" y="440" width="1" height="5"/><rect x="234" y="442" width="1" height="5"/><rect x="235" y="444" width="1" height="6"/><rect x="236" y="447" width="1" height="7"/><rect x="237" y="449" width="1" height="11"/><rect x="238" y="453" width="1" height="13"/><rect x="239" y="460" width="1" height="12"/><rect x="240" y="466" width="1" height="12"/><rect x="241" y="472" width="1" height="12"/><rect x="242" y="478" width="1" height="12"/><rect x="243" y="484" width="1" height="13"/><rect x="244" y="490" width="1" height="11"/><rect x="245" y="496" width="1" height="8"/><rect x="246" y="501" width="1" height="5"/><rect x="247" y="503" width="1" height="6"/><rect x="248" y="506" width="1" height="5"/><rect x="249" y="509" width="1" height="5"/><rect x="250" y="511" width="1" height="6"/><rect x="251" y="514" width="1" height="5"/><rect x="252" y="516" width="1" height="5"/><rect x="253" y="519" width="1" height="3"/><rect x="254" y="520" width="1" height="2"/><rect x="255" y="521" width="1" height="2"/><rect x="256" y="521" width="1" height="2"/><rect x="257" y="521" width="1" height="3"/><rect x="258" y="522" width="1" height="2"/><rect x="259" y="522" width="1" height="3"/><rect x="260" y="523" width="1" height="2"/><rect x="261" y="523" width="1" height="2"/><rect x="262" y="523" width="1" height="2"/><rect x="263" y="523" width="1" height="2"/><rect x="264" y="523" width="1" height="2"/><rect x="265" y="523" width="1" height="2"/><rect x="266" y="523" width="1" height="2"/><rect x="267" y="523" width="1" height="2"/><rect x="268" y="523" width="1" height="2"/><rect x="269" y="523" width="1" height="2"/><rect x="270" y="523" width="1" height="2"/><rect x="271" y="523" width="1" height="2"/><rect x="272" y="523" width="1" height="2"/><rect x="273" y="523" width="1" height="2"/><rect x="274" y="523" width="1" height="2"/><rect x="275" y="523" width="1" height="2"/><rect x="276" y="522" width="1" height="3"/><rect x="277" y="518" width="1" height="7"/><rect x="278" y="514" width="1" height="8"/><rect x="279" y="510" width="1" height="8"/><rect x="280" y="505" width="1" height="9"/><rect x="281" y="501" width="1" height="9"/><rect x="282" y="497" width="1" height="9"/><rect x="283" y="493" width="1" height="8"/><rect x="284" y="489" width="1" height="8"/><rect x="285" y="485" width="1" height="8"/><rect x="286" y="482" width="1" height="7"/><rect x="287" y="478" width="1" height="8"/><rect x="288" y="474" width="1" height="8"/><rect x="289" y="471" width="1" height="7"/><rect x="290" y="467" width="1" height="8"/><rect x="291" y="463" width="1" height="8"/><rect x="292" y="460" width="1" height="7"/><rect x="293" y="456" width="1" height="7"/><rect x="294" y="453" width="1" height="7"/><rect x="295" y="449" width="1" height="7"/><rect x="296" y="446" width="1" height="7"/><rect x="297" y="442" width="1" height="8"/><rect x="298" y="439" width="1" height="7"/><rect x="299" y="436" width="1" height="7"/><rect x="300" y="433" width="1" height="6"/><rect x="301" y="431" width="1" height="5"/><rect x="302" y="428" width="1" height="5"/><rect x="303" y="426" width="1" height="5"/><rect x="304" y="424" width="1" height="5"/><rect x="305" y="422" width="1" height="5"/><rect x="306" y="420" width="1" height="4"/><rect x="307" y="417" width="1" height="5"/><rect x="308" y="416" width="1" height="4"/><rect x="309" y="415" width="1" height="3"/><rect x="310" y="414" width="1" height="2"/><rect x="311" y="413" width="1" height="2"/><rect x="312" y="412" width="1" height="2"/><rect x="313" y="411" width="1" height="2"/><rect x="314" y="410" width="1" height="2"/><rect x="315" y="409" width="1" height="2"/><rect x="316" y="408" width="1" height="2"/><rect x="317" y="407" width="1" height="2"/><rect x="318" y="407" width="1" height="2"/><rect x="319" y="407" width="1" height="2"/><rect x="320" y="407" width="1" height="2"/><rect x="321" y="407" width="1" height="2"/><rect x="322" y="407" width="1" height="2"/><rect x="323" y="407" width="1" height="2"/><rect x="324" y="407" width="1" height="2"/><rect x="325" y="407" width="1" height="3"/><rect x="326" y="408" width="1" height="2"/><rect x="327" y="409" width="1" height="2"/><rect x="328" y="409" width="1" height="3"/><rect x="329" y="410" width="1" height="3"/><rect x="330" y="411" width="1" height="2"/><rect x="331" y="412" width="1" height="2"/><rect x="332" y="412" width="1" height="3"/><rect x="333" y="413" width="1" height="2"/><rect x="334" y="413" width="1" height="2"/><rect x="335" y="413" width="1" height="2"/><rect x="336" y="413" width="1" height="2"/><rect x="337" y="413" width="1" height="2"/><rect x="338" y="413" width="1" height="2"/><rect x="339" y="413" width="1" height="2"/><rect x="340" y="413" width="1" height="2"/><rect x="341" y="413" width="1" height="2"/><rect x="342" y="413" width="1" height="2"/><rect x="343" y="413" width="1" height="2"/><rect x="344" y="413" width="1" height="2"/><rect x="345" y="413" width="1" height="2"/><rect x="346" y="413" width="1" height="2"/><rect x="347" y="413" width="1" height="2"/><rect x="348" y="413" width="1" height="2"/><rect x="349" y="413" width="1" height="2"/><rect x="350" y="413" width="1" height="2"/><rect x="351" y="413" width="1" height="2"/><rect x="352" y="413" width="1" height="2"/><rect x="353" y="414" width="1" height="2"/><rect x="354" y="414" width="1" height="2"/><rect x="355" y="414" width="1" height="2"/><rect x="356" y="414" width="1" height="2"/><rect x="357" y="414" width="1" height="2"/><rect x="358" y="414" width="1" height="3"/><rect x="359" y="415" width="1" height="2"/><rect x="360" y="415" width="1" height="2"/><rect x="361" y="416" width="1" height="2"/><rect x="362" y="416" width="1" height="2"/><rect x="363" y="416" width="1" height="3"/><rect x="364" y="417" width="1" height="2"/><rect x="365" y="416" width="1" height="3"/><rect x="366" y="415" width="1" height="3"/><rect x="367" y="414" width="1" height="3"/><rect x="368" y="413" width="1" height="3"/><rect x="369" y="412" width="1" height="3"/><rect x="370" y="411" width="1" height="3"/><rect x="371" y="410" width="1" height="3"/><rect x="372" y="409" width="1" height="3"/><rect x="373" y="408" width="1" height="3"/><rect x="374" y="407" width="1" height="3"/><rect x="375" y="406" width="1" height="3"/><rect x="376" y="405" width="1" height="3"/><rect x="377" y="404" width="1" height="3"/><rect x="378" y="403" width="1" height="3"/><rect x="379" y="402" width="1" height="3"/><rect x="380" y="401" width="1" height="3"/><rect x="381" y="401" width="1" height="2"/><rect x="382" y="401" width="1" height="2"/><rect x="383" y="401" width="1" height="2"/><rect x="384" y="401" width="1" height="2"/><rect x="385" y="401" width="1" height="2"/><rect x="386" y="401" width="1" height="2"/><rect x="387" y="401" width="1" height="2"/><rect x="388" y="401" width="1" height="2"/><rect x="389" y="401" width="1" height="2"/><rect x="390" y="401" width="1" height="2"/><rect x="391" y="401" width="1" height="2"/><rect x="392" y="401" width="1" height="2"/><rect x="393" y="401" width="1" height="2"/><rect x="394" y="401" width="1" height="2"/><rect x="395" y="401" width="1" height="2"/><rect x="396" y="401" width="1" height="2"/><rect x="397" y="401" width="1" height="2"/><rect x="398" y="401" width="1" height="2"/><rect x="399" y="401" width="1" height="2"/><rect x="400" y="401" width="1" height="2"/><rect x="401" y="402" width="1" height="2"/><rect x="402" y="402" width="1" height="2"/><rect x="403" y="402" width="1" height="2"/><rect x="404" y="402" width="1" height="2"/><rect x="405" y="402" width="1" height="2"/><rect x="406" y="403" width="1" height="2"/><rect x="407" y="403" width="1" height="3"/><rect x="408" y="404" width="1" height="2"/><rect x="409" y="404" width="1" height="3"/><rect x="410" y="405" width="1" height="2"/><rect x="411" y="406" width="1" height="2"/><rect x="412" y="406" width="1" height="2"/><rect x="413" y="406" width="1" height="2"/><rect x="414" y="404" width="1" height="3"/><rect x="415" y="403" width="1" height="3"/><rect x="416" y="402" width="1" height="3"/><rect x="417" y="401" width="1" height="3"/><rect x="418" y="400" width="1" height="3"/><rect x="419" y="399" width="1" height="3"/><rect x="420" y="398" width="1" height="3"/><rect x="421" y="398" width="1" height="2"/><rect x="422" y="398" width="1" height="2"/><rect x="423" y="398" width="1" height="2"/><rect x="424" y="398" width="1" height="2"/><rect x="425" y="398" width="1" height="2"/><rect x="426" y="398" width="1" height="2"/><rect x="427" y="398" width="1" height="2"/><rect x="428" y="398" width="1" height="2"/><rect x="429" y="398" width="1" height="2"/><rect x="430" y="399" width="1" height="2"/><rect x="431" y="399" width="1" height="3"/><rect x="432" y="400" width="1" height="2"/><rect x="433" y="400" width="1" height="3"/><rect x="434" y="401" width="1" height="2"/><rect x="435" y="402" width="1" height="2"/><rect x="436" y="402" width="1" height="2"/><rect x="437" y="403" width="1" height="2"/><rect x="438" y="404" width="1" height="2"/><rect x="439" y="405" width="1" height="2"/><rect x="440" y="405" width="1" height="3"/><rect x="441" y="406" width="1" height="3"/><rect x="442" y="407" width="1" height="3"/><rect x="443" y="408" width="1" height="3"/><rect x="444" y="409" width="1" height="3"/><rect x="445" y="410" width="1" height="3"/><rect x="446" y="412" width="1" height="3"/><rect x="447" y="413" width="1" height="3"/><rect x="448" y="414" width="1" height="3"/><rect x="449" y="415" width="1" height="4"/><rect x="450" y="417" width="1" height="3"/><rect x="451" y="418" width="1" height="3"/><rect x="452" y="419" width="1" height="4"/><rect x="453" y="421" width="1" height="3"/><rect x="454" y="422" width="1" height="4"/><rect x="455" y="424" width="1" height="4"/><rect x="456" y="426" width="1" height="4"/><rect x="457" y="428" width="1" height="4"/><rect x="458" y="429" width="1" height="4"/><rect x="459" y="431" width="1" height="4"/><rect x="460" y="433" width="1" height="4"/><rect x="461" y="435" width="1" height="4"/><rect x="462" y="437" width="1" height="5"/><rect x="463" y="439" width="1" height="5"/><rect x="464" y="441" width="1" height="5"/><rect x="465" y="443" width="1" height="5"/><rect x="466" y="446" width="1" height="5"/><rect x="467" y="448" width="1" height="5"/><rect x="468" y="450" width="1" height="5"/><rect x="469" y="452" width="1" height="6"/><rect x="470" y="455" width="1" height="6"/><rect x="471" y="458" width="1" height="6"/><rect x="472" y="461" width="1" height="6"/><rect x="473" y="464" width="1" height="6"/><rect x="474" y="467" width="1" height="6"/><rect x="475" y="470" width="1" height="6"/><rect x="476" y="473" width="1" height="6"/><rect x="477" y="476" width="1" height="6"/><rect x="478" y="479" width="1" height="6"/><rect x="479" y="482" width="1" height="6"/><rect x="480" y="485" width="1" height="6"/><rect x="481" y="488" width="1" height="6"/><rect x="482" y="490" width="1" height="6"/><rect x="483" y="493" width="1" height="6"/><rect x="484" y="496" width="1" height="5"/><rect x="485" y="497" width="1" height="4"/><rect x="486" y="494" width="1" height="5"/><rect x="487" y="492" width="1" height="5"/><rect x="488" y="489" width="1" height="5"/><rect x="489" y="487" width="1" height="5"/><rect x="490" y="484" width="1" height="5"/><rect x="491" y="482" width="1" height="5"/><rect x="492" y="478" width="1" height="6"/><rect x="493" y="474" width="1" height="8"/><rect x="494" y="470" width="1" height="9"/><rect x="495" y="466" width="1" height="8"/><rect x="496" y="462" width="1" height="8"/><rect x="497" y="457" width="1" height="9"/><rect x="498" y="453" width="1" height="9"/><rect x="499" y="449" width="1" height="9"/><rect x="500" y="445" width="1" height="8"/><rect x="501" y="440" width="1" height="9"/><rect x="502" y="435" width="1" height="10"/><rect x="503" y="431" width="1" height="9"/><rect x="504" y="426" width="1" height="10"/><rect x="505" y="421" width="1" height="10"/><rect x="506" y="417" width="1" height="9"/><rect x="507" y="412" width="1" height="10"/><rect x="508" y="409" width="1" height="8"/><rect x="509" y="409" width="1" height="3"/><rect x="510" y="409" width="1" height="2"/><rect x="511" y="409" width="1" height="2"/><rect x="512" y="409" width="1" height="2"/><rect x="513" y="409" width="1" height="2"/><rect x="514" y="409" width="1" height="2"/><rect x="515" y="409" width="1" height="2"/><rect x="516" y="409" width="1" height="2"/><rect x="517" y="409" width="1" height="2"/><rect x="518" y="409" width="1" height="2"/><rect x="519" y="409" width="1" height="2"/><rect x="520" y="409" width="1" height="2"/><rect x="521" y="409" width="1" height="2"/><rect x="522" y="409" width="1" height="2"/><rect x="523" y="409" width="1" height="2"/><rect x="524" y="409" width="1" height="2"/><rect x="525" y="408" width="1" height="3"/><rect x="526" y="407" width="1" height="3"/><rect x="527" y="406" width="1" height="3"/><rect x="528" y="405" width="1" height="3"/><rect x="529" y="404" width="1" height="3"/><rect x="530" y="402" width="1" height="3"/><rect x="531" y="401" width="1" height="3"/><rect x="532" y="400" width="1" height="3"/><rect x="533" y="400" width="1" height="2"/><rect x="534" y="401" width="1" height="2"/><rect x="535" y="401" width="1" height="2"/><rect x="536" y="401" width="1" height="3"/><rect x="537" y="402" width="1" height="2"/><rect x="538" y="402" width="1" height="2"/><rect x="539" y="403" width="1" height="2"/><rect x="540" y="403" width="1" height="2"/><rect x="541" y="403" width="1" height="3"/><rect x="542" y="404" width="1" height="3"/><rect x="543" y="405" width="1" height="3"/><rect x="544" y="406" width="1" height="3"/><rect x="545" y="407" width="1" height="3"/><rect x="546" y="408" width="1" height="3"/><rect x="547" y="409" width="1" height="3"/><rect x="548" y="410" width="1" height="3"/><rect x="549" y="411" width="1" height="2"/><rect x="550" y="412" width="1" height="2"/><rect x="551" y="412" width="1" height="3"/><rect x="552" y="413" width="1" height="2"/><rect x="553" y="413" width="1" height="3"/><rect x="554" y="414" width="1" height="2"/><rect x="555" y="415" width="1" height="2"/><rect x="556" y="415" width="1" height="3"/><rect x="557" y="416" width="1" height="4"/><rect x="558" y="418" width="1" height="5"/><rect x="559" y="420" width="1" height="5"/><rect x="560" y="422" width="1" height="5"/><rect x="561" y="424" width="1" height="5"/><rect x="562" y="427" width="1" height="4"/><rect x="563" y="429" width="1" height="5"/><rect x="564" y="431" width="1" height="5"/><rect x="565" y="433" width="1" height="7"/><rect x="566" y="436" width="1" height="7"/><rect x="567" y="439" width="1" height="7"/><rect x="568" y="443" width="1" height="6"/><rect x="569" y="446" width="1" height="7"/><rect x="570" y="449" width="1" height="7"/><rect x="571" y="452" width="1" height="7"/><rect x="572" y="456" width="1" height="7"/><rect x="573" y="459" width="1" height="8"/><rect x="574" y="463" width="1" height="8"/><rect x="575" y="467" width="1" height="8"/><rect x="576" y="471" width="1" height="8"/><rect x="577" y="475" width="1" height="8"/><rect x="578" y="479" width="1" height="8"/><rect x="579" y="483" width="1" height="9"/><rect x="580" y="487" width="1" height="8"/><rect x="581" y="491" width="1" height="8"/><rect x="582" y="495" width="1" height="7"/><rect x="583" y="498" width="1" height="7"/><rect x="584" y="502" width="1" height="7"/><rect x="585" y="505" width="1" height="7"/><rect x="586" y="508" width="1" height="7"/><rect x="587" y="512" width="1" height="7"/><rect x="588" y="515" width="1" height="6"/><rect x="589" y="518" width="1" height="3"/><rect x="590" y="517" width="1" height="3"/><rect x="591" y="516" width="1" height="3"/><rect x="592" y="515" width="1" height="3"/><rect x="593" y="514" width="1" height="3"/><rect x="594" y="513" width="1" height="3"/><rect x="595" y="512" width="1" height="3"/><rect x="596" y="511" width="1" height="3"/><rect x="597" y="511" width="1" height="2"/><rect x="598" y="511" width="1" height="2"/><rect x="599" y="511" width="1" height="2"/><rect x="600" y="511" width="1" height="2"/><rect x="601" y="511" width="1" height="2"/><rect x="602" y="511" width="1" height="2"/><rect x="603" y="511" width="1" height="2"/><rect x="604" y="511" width="1" height="2"/><rect x="605" y="511" width="1" height="3"/><rect x="606" y="512" width="1" height="3"/><rect x="607" y="513" width="1" height="3"/><rect x="608" y="514" width="1" height="3"/><rect x="609" y="515" width="1" height="3"/><rect x="610" y="516" width="1" height="3"/><rect x="611" y="517" width="1" height="3"/><rect x="612" y="518" width="1" height="3"/><rect x="613" y="519" width="1" height="2"/><rect x="614" y="519" width="1" height="2"/><rect x="615" y="518" width="1" height="3"/><rect x="616" y="518" width="1" height="2"/><rect x="617" y="518" width="1" height="2"/><rect x="618" y="518" width="1" height="2"/><rect x="619" y="517" width="1" height="2"/><rect x="620" y="517" width="1" height="2"/><rect x="621" y="517" width="1" height="5"/><rect x="622" y="519" width="1" height="5"/><rect x="623" y="521" width="1" height="6"/><rect x="624" y="524" width="1" height="5"/><rect x="625" y="526" width="1" height="6"/><rect x="626" y="529" width="1" height="5"/><rect x="627" y="531" width="1" height="5"/><rect x="628" y="534" width="1" height="4"/><rect x="629" y="536" width="1" height="3"/><rect x="630" y="537" width="1" height="2"/><rect x="631" y="538" width="1" height="2"/><rect x="632" y="538" width="1" height="3"/><rect x="633" y="539" width="1" height="2"/><rect x="634" y="539" width="1" height="3"/><rect x="635" y="540" width="1" height="2"/><rect x="636" y="540" width="1" height="3"/><rect x="637" y="541" width="1" height="2"/><rect x="638" y="541" width="1" height="2"/><rect x="639" y="541" width="1" height="2"/><rect x="640" y="541" width="1" height="2"/><rect x="641" y="541" width="1" height="2"/><rect x="642" y="541" width="1" height="2"/><rect x="643" y="541" width="1" height="2"/><rect x="644" y="541" width="1" height="2"/><rect x="645" y="539" width="1" height="4"/><rect x="646" y="538" width="1" height="3"/><rect x="647" y="536" width="1" height="4"/><rect x="648" y="535" width="1" height="3"/><rect x="649" y="533" width="1" height="4"/><rect x="650" y="532" width="1" height="4"/><rect x="651" y="531" width="1" height="3"/><rect x="652" y="528" width="1" height="5"/><rect x="653" y="523" width="1" height="8"/><rect x="654" y="518" width="1" height="10"/><rect x="655" y="514" width="1" height="9"/><rect x="656" y="509" width="1" height="10"/><rect x="657" y="504" width="1" height="10"/><rect x="658" y="500" width="1" height="9"/><rect x="659" y="495" width="1" height="10"/><rect x="660" y="490" width="1" height="10"/><rect x="661" y="484" width="1" height="11"/><rect x="662" y="478" width="1" height="12"/><rect x="663" y="472" width="1" height="12"/><rect x="664" y="466" width="1" height="12"/><rect x="665" y="461" width="1" height="12"/><rect x="666" y="455" width="1" height="12"/><rect x="667" y="449" width="1" height="12"/><rect x="668" y="445" width="1" height="10"/><rect x="669" y="443" width="1" height="6"/><rect x="670" y="441" width="1" height="4"/><rect x="671" y="439" width="1" height="5"/><rect x="672" y="438" width="1" height="4"/><rect x="673" y="436" width="1" height="4"/><rect x="674" y="434" width="1" height="4"/><rect x="675" y="432" width="1" height="4"/><rect x="676" y="431" width="1" height="4"/><rect x="677" y="431" width="1" height="2"/></g></g></g>
<g shape-rendering="crispEdges" fill="#fff">
<rect x="681" y="40" width="2" height="1" fill="#fff"/><rect x="681" y="73" width="2" height="1" fill="#fff"/><rect x="681" y="106" width="2" height="1" fill="#fff"/><rect x="681" y="139" width="2" height="1" fill="#fff"/><rect x="681" y="172" width="2" height="1" fill="#fff"/><rect x="681" y="205" width="2" height="1" fill="#fff"/><rect x="681" y="238" width="2" height="1" fill="#fff"/><rect x="681" y="271" width="2" height="1" fill="#fff"/><rect x="681" y="304" width="2" height="1" fill="#fff"/><rect x="681" y="337" width="2" height="1" fill="#fff"/><rect x="681" y="370" width="2" height="1" fill="#fff"/>
<rect x="681" y="377" width="2" height="1" fill="#fff"/><rect x="16" y="41" width="7" height="1" fill="#fff"/><rect x="17" y="42" width="5" height="1" fill="#fff"/><rect x="18" y="43" width="3" height="1" fill="#fff"/><rect x="19" y="44" width="1" height="1" fill="#fff"/><polygon points="13,547 13,552 18,552" fill="#778899"/><rect x="681" y="551" width="2" height="1" fill="#fff"/>
<rect x="13" y="553" width="1" height="3" fill="#fff"/><rect x="77" y="553" width="1" height="3" fill="#fff"/><rect x="141" y="553" width="1" height="3" fill="#fff"/><rect x="205" y="553" width="1" height="3" fill="#fff"/><rect x="269" y="553" width="1" height="3" fill="#fff"/><rect x="333" y="553" width="1" height="3" fill="#fff"/><rect x="397" y="553" width="1" height="3" fill="#fff"/><rect x="461" y="553" width="1" height="3" fill="#fff"/><rect x="525" y="553" width="1" height="3" fill="#fff"/><rect x="589" y="553" width="1" height="3" fill="#fff"/><rect x="653" y="553" width="1" height="3" fill="#fff"/>
</g>
</svg>
<div style="position:absolute;left:686px;top:37px;font-size:10px;color:#fff;white-space:nowrap;line-height:1;transform:scaleX(0.935);transform-origin:0 0;-webkit-text-stroke:0.2px #fff;text-rendering:geometricPrecision;">121.510</div><div style="position:absolute;left:686px;top:70px;font-size:10px;color:#fff;white-space:nowrap;line-height:1;transform:scaleX(0.935);transform-origin:0 0;-webkit-text-stroke:0.2px #fff;text-rendering:geometricPrecision;">121.225</div><div style="position:absolute;left:686px;top:103px;font-size:10px;color:#fff;white-space:nowrap;line-height:1;transform:scaleX(0.935);transform-origin:0 0;-webkit-text-stroke:0.2px #fff;text-rendering:geometricPrecision;">120.940</div><div style="position:absolute;left:686px;top:136px;font-size:10px;color:#fff;white-space:nowrap;line-height:1;transform:scaleX(0.935);transform-origin:0 0;-webkit-text-stroke:0.2px #fff;text-rendering:geometricPrecision;">120.655</div><div style="position:absolute;left:686px;top:169px;font-size:10px;color:#fff;white-space:nowrap;line-height:1;transform:scaleX(0.935);transform-origin:0 0;-webkit-text-stroke:0.2px #fff;text-rendering:geometricPrecision;">120.370</div><div style="position:absolute;left:686px;top:202px;font-size:10px;color:#fff;white-space:nowrap;line-height:1;transform:scaleX(0.935);transform-origin:0 0;-webkit-text-stroke:0.2px #fff;text-rendering:geometricPrecision;">120.085</div><div style="position:absolute;left:686px;top:235px;font-size:10px;color:#fff;white-space:nowrap;line-height:1;transform:scaleX(0.935);transform-origin:0 0;-webkit-text-stroke:0.2px #fff;text-rendering:geometricPrecision;">119.800</div><div style="position:absolute;left:686px;top:268px;font-size:10px;color:#fff;white-space:nowrap;line-height:1;transform:scaleX(0.935);transform-origin:0 0;-webkit-text-stroke:0.2px #fff;text-rendering:geometricPrecision;">119.515</div><div style="position:absolute;left:686px;top:301px;font-size:10px;color:#fff;white-space:nowrap;line-height:1;transform:scaleX(0.935);transform-origin:0 0;-webkit-text-stroke:0.2px #fff;text-rendering:geometricPrecision;">119.230</div><div style="position:absolute;left:686px;top:334px;font-size:10px;color:#fff;white-space:nowrap;line-height:1;transform:scaleX(0.935);transform-origin:0 0;-webkit-text-stroke:0.2px #fff;text-rendering:geometricPrecision;">118.945</div><div style="position:absolute;left:686px;top:367px;font-size:10px;color:#fff;white-space:nowrap;line-height:1;transform:scaleX(0.935);transform-origin:0 0;-webkit-text-stroke:0.2px #fff;text-rendering:geometricPrecision;">118.660</div><div style="position:absolute;left:683px;top:380px;font-size:10px;color:#fff;white-space:nowrap;line-height:1;transform:scaleX(0.935);transform-origin:0 0;-webkit-text-stroke:0.2px #fff;text-rendering:geometricPrecision;">120</div><div style="position:absolute;left:683px;top:390px;font-size:10px;color:#fff;white-space:nowrap;line-height:1;transform:scaleX(0.935);transform-origin:0 0;-webkit-text-stroke:0.2px #fff;text-rendering:geometricPrecision;">100</div><div style="position:absolute;left:683px;top:405px;font-size:10px;color:#fff;white-space:nowrap;line-height:1;transform:scaleX(0.935);transform-origin:0 0;-webkit-text-stroke:0.2px #fff;text-rendering:geometricPrecision;">80</div><div style="position:absolute;left:683px;top:429px;font-size:10px;color:#fff;white-space:nowrap;line-height:1;transform:scaleX(0.935);transform-origin:0 0;-webkit-text-stroke:0.2px #fff;text-rendering:geometricPrecision;">50</div><div style="position:absolute;left:683px;top:469px;font-size:10px;color:#fff;white-space:nowrap;line-height:1;transform:scaleX(0.935);transform-origin:0 0;-webkit-text-stroke:0.2px #fff;text-rendering:geometricPrecision;">0.00</div><div style="position:absolute;left:683px;top:509px;font-size:10px;color:#fff;white-space:nowrap;line-height:1;transform:scaleX(0.935);transform-origin:0 0;-webkit-text-stroke:0.2px #fff;text-rendering:geometricPrecision;">-50</div><div style="position:absolute;left:683px;top:533px;font-size:10px;color:#fff;white-space:nowrap;line-height:1;transform:scaleX(0.935);transform-origin:0 0;-webkit-text-stroke:0.2px #fff;text-rendering:geometricPrecision;">-80</div><div style="position:absolute;left:683px;top:542px;font-size:10px;color:#fff;white-space:nowrap;line-height:1;transform:scaleX(0.935);transform-origin:0 0;-webkit-text-stroke:0.2px #fff;text-rendering:geometricPrecision;">-100</div><div style="position:absolute;left:12px;top:558px;font-size:10px;color:#fff;white-space:nowrap;line-height:1;transform:scaleX(0.935);transform-origin:0 0;-webkit-text-stroke:0.2px #fff;text-rendering:geometricPrecision;">18 Mar 2022</div><div style="position:absolute;left:76px;top:558px;font-size:10px;color:#fff;white-space:nowrap;line-height:1;transform:scaleX(0.935);transform-origin:0 0;-webkit-text-stroke:0.2px #fff;text-rendering:geometricPrecision;">18 Mar 15:00</div><div style="position:absolute;left:140px;top:558px;font-size:10px;color:#fff;white-space:nowrap;line-height:1;transform:scaleX(0.935);transform-origin:0 0;-webkit-text-stroke:0.2px #fff;text-rendering:geometricPrecision;">21 Mar 00:00</div><div style="position:absolute;left:204px;top:558px;font-size:10px;color:#fff;white-space:nowrap;line-height:1;transform:scaleX(0.935);transform-origin:0 0;-webkit-text-stroke:0.2px #fff;text-rendering:geometricPrecision;">21 Mar 08:00</div><div style="position:absolute;left:268px;top:558px;font-size:10px;color:#fff;white-space:nowrap;line-height:1;transform:scaleX(0.935);transform-origin:0 0;-webkit-text-stroke:0.2px #fff;text-rendering:geometricPrecision;">21 Mar 16:00</div><div style="position:absolute;left:332px;top:558px;font-size:10px;color:#fff;white-space:nowrap;line-height:1;transform:scaleX(0.935);transform-origin:0 0;-webkit-text-stroke:0.2px #fff;text-rendering:geometricPrecision;">22 Mar 00:00</div><div style="position:absolute;left:396px;top:558px;font-size:10px;color:#fff;white-space:nowrap;line-height:1;transform:scaleX(0.935);transform-origin:0 0;-webkit-text-stroke:0.2px #fff;text-rendering:geometricPrecision;">22 Mar 08:00</div><div style="position:absolute;left:460px;top:558px;font-size:10px;color:#fff;white-space:nowrap;line-height:1;transform:scaleX(0.935);transform-origin:0 0;-webkit-text-stroke:0.2px #fff;text-rendering:geometricPrecision;">22 Mar 16:00</div><div style="position:absolute;left:524px;top:558px;font-size:10px;color:#fff;white-space:nowrap;line-height:1;transform:scaleX(0.935);transform-origin:0 0;-webkit-text-stroke:0.2px #fff;text-rendering:geometricPrecision;">23 Mar 00:00</div><div style="position:absolute;left:588px;top:558px;font-size:10px;color:#fff;white-space:nowrap;line-height:1;transform:scaleX(0.935);transform-origin:0 0;-webkit-text-stroke:0.2px #fff;text-rendering:geometricPrecision;">23 Mar 08:00</div><div style="position:absolute;left:652px;top:558px;font-size:10px;color:#fff;white-space:nowrap;line-height:1;transform:scaleX(0.935);transform-origin:0 0;-webkit-text-stroke:0.2px #fff;text-rendering:geometricPrecision;">23 Mar 16:00</div><div style="position:absolute;left:27px;top:39px;font-size:10px;color:#fff;white-space:nowrap;line-height:1;transform:scaleX(0.935);transform-origin:0 0;-webkit-text-stroke:0.2px #fff;text-rendering:geometricPrecision;">USDJPY,H1</div><div style="position:absolute;left:85px;top:39px;font-size:10px;color:#fff;white-space:nowrap;line-height:1;transform:scaleX(0.935);transform-origin:0 0;-webkit-text-stroke:0.2px #fff;text-rendering:geometricPrecision;">143.951</div><div style="position:absolute;left:121px;top:39px;font-size:10px;color:#fff;white-space:nowrap;line-height:1;transform:scaleX(0.935);transform-origin:0 0;-webkit-text-stroke:0.2px #fff;text-rendering:geometricPrecision;">143.969</div><div style="position:absolute;left:157px;top:39px;font-size:10px;color:#fff;white-space:nowrap;line-height:1;transform:scaleX(0.935);transform-origin:0 0;-webkit-text-stroke:0.2px #fff;text-rendering:geometricPrecision;">143.679</div><div style="position:absolute;left:193px;top:39px;font-size:10px;color:#fff;white-space:nowrap;line-height:1;transform:scaleX(0.935);transform-origin:0 0;-webkit-text-stroke:0.2px #fff;text-rendering:geometricPrecision;">143.697</div><div style="position:absolute;left:17px;top:381px;font-size:10px;color:#fff;white-space:nowrap;line-height:1;transform:scaleX(0.905);transform-origin:0 0;-webkit-text-stroke:0.2px #fff;text-rendering:geometricPrecision;">R1(9) 68.3</div>
<div style="position:absolute;left:30px;top:13px;font-size:12px;color:#1e1e1e;line-height:1;white-space:nowrap;transform:scaleX(0.9);transform-origin:0 0">USDJPY,H1</div>
<svg width="738" height="32" style="position:absolute;left:0;top:0">
<g shape-rendering="crispEdges">
<rect x="11" y="11" width="12" height="9" fill="#4b8bf0"/>
<rect x="12" y="12" width="10" height="7" fill="#fffef4"/>
<rect x="13" y="15" width="2" height="1" fill="#4b8bf0"/><rect x="14" y="14" width="1" height="1" fill="#4b8bf0"/>
<rect x="17" y="14" width="2" height="1" fill="#4b8bf0"/><rect x="18" y="15" width="2" height="1" fill="#4b8bf0"/>
<rect x="14" y="16" width="11" height="9" fill="#4b8bf0"/>
<rect x="15" y="17" width="9" height="7" fill="#ffffff"/>
<rect x="16" y="19" width="1" height="1" fill="#4b8bf0"/><rect x="17" y="20" width="1" height="1" fill="#4b8bf0"/><rect x="18" y="21" width="1" height="2" fill="#4b8bf0"/>
<rect x="19" y="20" width="1" height="1" fill="#4b8bf0"/><rect x="20" y="19" width="1" height="1" fill="#4b8bf0"/><rect x="21" y="20" width="1" height="1" fill="#4b8bf0"/><rect x="22" y="21" width="1" height="1" fill="#4b8bf0"/>
<rect x="12" y="11" width="1" height="1" fill="#3a9a70"/><rect x="16" y="11" width="1" height="1" fill="#3a9a70"/><rect x="20" y="11" width="1" height="1" fill="#3a9a70"/>
<rect x="11" y="14" width="1" height="1" fill="#3a9a70"/><rect x="11" y="18" width="1" height="1" fill="#3a9a70"/>
<rect x="16" y="16" width="1" height="1" fill="#3a9a70"/><rect x="20" y="16" width="1" height="1" fill="#3a9a70"/><rect x="24" y="19" width="1" height="1" fill="#3a9a70"/><rect x="14" y="21" width="1" height="1" fill="#3a9a70"/><rect x="19" y="24" width="1" height="1" fill="#3a9a70"/>
</g>
<!-- minimize -->
<rect x="626.5" y="9.5" width="31" height="17" rx="2.5" fill="#b4c9df" stroke="#4e5a6e"/>
<rect x="627.5" y="10.5" width="29" height="15" rx="1.5" fill="none" stroke="#e8f0f8" stroke-opacity="0.8"/>
<rect x="628" y="11" width="28" height="6" fill="#c3d5e9"/>
<rect x="628" y="17" width="28" height="8" fill="url(#gb)"/>
<rect x="636.5" y="17.5" width="10" height="4" rx="1.5" fill="#ebe8e4" stroke="#3a3c4a"/>
<!-- maximize -->
<rect x="660.5" y="9.5" width="31" height="17" rx="2.5" fill="#b4c9df" stroke="#4e5a6e"/>
<rect x="661.5" y="10.5" width="29" height="15" rx="1.5" fill="none" stroke="#e8f0f8" stroke-opacity="0.8"/>
<rect x="662" y="11" width="28" height="6" fill="#c3d5e9"/>
<rect x="662" y="17" width="28" height="8" fill="url(#gb)"/>
<rect x="670.5" y="13.5" width="10" height="8" rx="1" fill="#ebe8e4" stroke="#3a3c4a"/>
<rect x="673.5" y="16.5" width="4" height="2" fill="#9fb4cc" stroke="#3a3c4a"/>
<!-- close -->
<defs>
<linearGradient id="gb" x1="0" y1="0" x2="0" y2="1"><stop offset="0" stop-color="#9bb4ce"/><stop offset="1" stop-color="#b9cfe6"/></linearGradient>
<linearGradient id="gr" x1="0" y1="0" x2="0" y2="1"><stop offset="0" stop-color="#bd3f24"/><stop offset="1" stop-color="#db7a66"/></linearGradient>
</defs>
<rect x="694.5" y="9.5" width="31" height="17" rx="2.5" fill="#d77a66" stroke="#4a1a20"/>
<rect x="695.5" y="10.5" width="29" height="15" rx="1.5" fill="none" stroke="#f4cfc6" stroke-opacity="0.9"/>
<rect x="696" y="11" width="28" height="6" fill="#e49b8b"/>
<rect x="696" y="17" width="28" height="8" fill="url(#gr)"/>
<path d="M704.5,13.5 L708.3,13.5 L709.6,15.3 L710.9,13.5 L714.7,13.5 L711.6,17.4 L714.7,21.4 L710.9,21.4 L709.6,19.6 L708.3,21.4 L704.5,21.4 L707.6,17.4 Z" fill="#f4f4f4" stroke="#3a3c4a" stroke-width="1"/>
</svg>

<div style="position:absolute;left:734px;top:0;width:4px;height:3px;background:#e8e8e8"></div>
<div style="position:absolute;left:732px;top:0;width:2px;height:1px;background:#102828"></div>
<div style="position:absolute;left:734px;top:1px;width:1px;height:2px;background:#102828"></div>
<div style="position:absolute;left:732px;top:1px;width:2px;height:1px;background:#c0f0ff"></div>
<div style="position:absolute;left:733px;top:2px;width:1px;height:1px;background:#80e0f8"></div>
</body></html>
